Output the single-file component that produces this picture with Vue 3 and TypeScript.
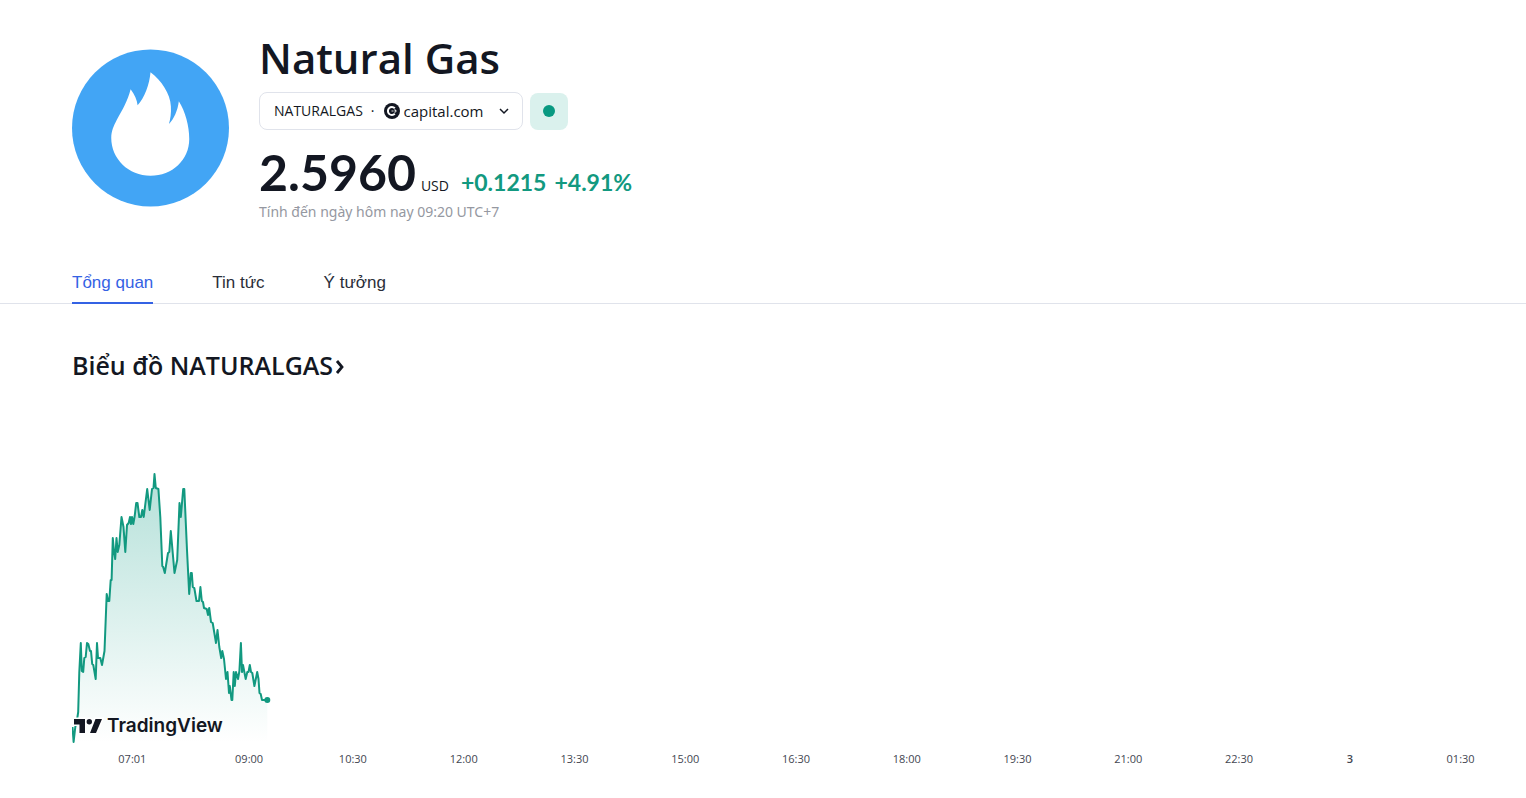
<script setup lang="ts">
interface Tab {
  label: string
  href: string
  active: boolean
}

const tabs: Tab[] = [
  { label: 'Tổng quan', href: '#overview', active: true },
  { label: 'Tin tức', href: '#news', active: false },
  { label: 'Ý tưởng', href: '#ideas', active: false },
]

const ticks: string[] = [
  '07:01', '09:00', '10:30', '12:00', '13:30', '15:00', '16:30',
  '18:00', '19:30', '21:00', '22:30', '3', '01:30',
]

const series: [number, number][] = [
  [72.5, 727], [73.6, 742], [75.3, 727], [77, 720], [78.2, 712], [79.3, 672], [80.8, 643], [81.8, 671], [83.2, 672],
  [84.3, 658], [85.7, 657], [87, 643], [88.3, 644], [90, 651], [91, 651], [92.2, 664],
  [93.3, 665], [95.7, 679], [97, 643], [98, 658], [100.3, 658], [102, 665], [104.5, 651],
  [106.7, 594], [108, 601], [109.3, 601], [110.7, 580], [111.6, 580], [112.8, 538],
  [114, 552], [115.2, 559], [116.5, 538], [117.7, 552], [119.3, 545], [121.5, 517],
  [123.5, 527], [125.3, 552], [127, 525], [128.7, 523], [130, 517], [131, 524], [132, 517],
  [133.3, 524], [134.7, 516], [136.2, 503], [137.5, 503], [139.3, 517], [141, 517],
  [142.3, 510], [143.7, 517], [147.2, 489], [149.7, 510], [152, 489], [153.5, 488],
  [154.5, 474], [155.8, 488], [158.4, 489], [160.3, 517], [162.3, 566], [163.2, 567],
  [164.8, 573], [168, 553], [169.3, 552], [170.8, 531], [174.5, 573], [177.2, 560],
  [179.5, 503], [180.8, 517], [183.2, 489], [184.3, 489], [187, 550], [189.2, 594],
  [190.8, 573], [191.8, 573], [192.8, 587], [194.3, 588], [196.5, 601], [199, 601],
  [200.4, 587], [201.8, 601], [203, 602], [204, 608], [206.7, 609], [208, 615], [209.2, 608],
  [211, 622], [212.7, 623], [216, 643], [217.5, 630], [219.3, 647], [221.2, 658],
  [222.3, 651], [224, 659], [226, 679], [227.5, 672], [229, 693], [229.8, 686], [231.5, 700],
  [232.3, 700], [233.7, 672], [234.8, 686], [236, 672], [238, 679], [239.4, 671],
  [240.9, 643], [242, 672], [243, 665], [245.7, 679], [247.3, 672], [248.5, 672],
  [249.8, 665], [251, 672], [252.3, 673], [254.4, 686], [257.2, 672], [258.5, 679],
  [259.5, 693], [260.7, 694], [262, 700], [267.3, 700],
]

const line = series.map(([x, y]) => `${x},${y}`).join(' ')
const area = `${line} 267.3,743 72.5,743`
</script>

<template>
  <main class="page">
    <header class="symbol">
      <svg class="symbol-logo" viewBox="0 0 158 158" role="img" aria-label="Natural Gas">
        <circle cx="79" cy="79" r="79" fill="#42a5f5" />
        <path
          d="M79 23C90 31 99 45 99.500 57C100 64 99 70 97.500 75C102.500 70 106.500 61 107.500 52C114 62 118 77 118 90C118 111 101 127 79 127C57 127 39.500 110 39.500 89C39.500 82 42 77 45 71C51 60 56 52 59 40C63 45 65.500 51 66 56C73 49 78 35 79 23Z"
          fill="#fff"
        />
      </svg>
      <div class="symbol-info">
        <h1 class="name">Natural Gas</h1>
        <div class="row">
          <button class="exchange" type="button">
            <span>NATURALGAS</span>
            <span class="dot">·</span>
            <svg class="source-logo" viewBox="0 0 16 16" aria-hidden="true">
              <circle cx="8" cy="8" r="8" fill="#131722" />
              <path d="M10.800 5.200A4 4 0 1 0 10.800 10.800" fill="none" stroke="#fff" stroke-width="2" />
              <path d="M7.500 8H9.500M10.500 6.500L12 8L10.500 9.500" fill="none" stroke="#ddd" stroke-width="1.200" />
            </svg>
            <span class="source">capital.com</span>
            <svg class="chevron" viewBox="0 0 12 8" aria-hidden="true">
              <path d="M2 2L6 6L10 2" fill="none" stroke="#131722" stroke-width="1.500" />
            </svg>
          </button>
          <button class="status" type="button" aria-label="Market open"><span class="status-dot"></span></button>
        </div>
        <div class="quote">
          <span class="price">2.5960</span>
          <span class="currency">USD</span>
          <span class="change">+0.1215</span>
          <span class="change percent">+4.91%</span>
        </div>
        <p class="asof">Tính đến ngày hôm nay 09:20 UTC+7</p>
      </div>
    </header>

    <nav class="tabs">
      <a v-for="tab in tabs" :key="tab.href" :href="tab.href" class="tab" :class="{ active: tab.active }">{{ tab.label }}</a>
    </nav>

    <section class="chart-section">
      <h2 class="heading">
        <a href="#chart" class="heading-link">
          <span>Biểu đồ NATURALGAS</span>
          <svg class="heading-arrow" viewBox="0 0 10 16" aria-hidden="true">
            <path d="M2 2L7 8L2 14" fill="none" stroke="#131722" stroke-width="2.800" />
          </svg>
        </a>
      </h2>
      <div class="chart">
        <svg class="plot" viewBox="72 464 208 280" aria-hidden="true">
          <defs>
            <linearGradient id="fade" gradientUnits="userSpaceOnUse" x1="0" y1="474" x2="0" y2="743">
              <stop offset="0" stop-color="#089981" stop-opacity="0.3" />
              <stop offset="1" stop-color="#089981" stop-opacity="0" />
            </linearGradient>
          </defs>
          <polygon :points="area" fill="url(#fade)" />
          <polyline :points="line" fill="none" stroke="#129980" stroke-width="2" stroke-linejoin="round" />
          <circle cx="267.300" cy="700" r="3" fill="#129980" />
        </svg>
        <a class="brand" href="#tradingview">
          <svg class="brand-mark" viewBox="0 0 30 16" aria-hidden="true">
            <path
              d="M1 1H12V15H6.500V6.500H1ZM22.500 1H29L23 15H17ZM19 3.700A2.700 2.700 0 1 1 13.600 3.700A2.700 2.700 0 1 1 19 3.700Z"
              fill="#131722" stroke="#fff" stroke-width="3" paint-order="stroke"
            />
          </svg>
          <span class="brand-name">TradingView</span>
        </a>
      </div>
      <ol class="axis">
        <li v-for="tick in ticks" :key="tick" :class="{ day: tick === '3' }">{{ tick }}</li>
      </ol>
    </section>
  </main>
</template>

<style>
body {
  background: #fff;
}
</style>

<style scoped>
.page {
  overflow: hidden;
  color: #131722;
  font-family: "Open Sans", "Noto Sans", sans-serif;
}
.symbol {
  display: flex;
  gap: 30px;
  padding: 32px 72px 0;
}
.symbol-logo {
  flex: none;
  width: 157px;
  height: 158px;
  margin-top: 17px;
}
.name {
  margin: 0;
  font-size: 42px;
  line-height: 52px;
  font-weight: 600;
}
.row {
  display: flex;
  align-items: center;
  gap: 7px;
  margin-top: 8px;
}
.exchange {
  display: flex;
  align-items: center;
  box-sizing: border-box;
  height: 38px;
  padding: 0 12px 0 14px;
  border: 1px solid #e0e3eb;
  border-radius: 8px;
  background: #fff;
  color: inherit;
  font: 14px/20px "Open Sans", "Noto Sans", sans-serif;
}
.dot {
  margin: 0 9px 0 8px;
}
.source-logo {
  width: 16px;
  height: 16px;
  margin-right: 4px;
}
.source {
  font-size: 15px;
}
.chevron {
  width: 12px;
  height: 8px;
  margin-left: 14px;
}
.status {
  display: grid;
  place-items: center;
  width: 38px;
  height: 37px;
  padding: 0;
  border: 0;
  border-radius: 8px;
  background: #daf1ed;
}
.status-dot {
  width: 12px;
  height: 12px;
  border-radius: 50%;
  background: #089981;
}
.quote {
  display: flex;
  align-items: baseline;
  margin-top: 13px;
  line-height: 20px;
}
.price {
  font-family: Lato, sans-serif;
  font-size: 50px;
  line-height: 58px;
  font-weight: 700;
}
.currency {
  margin-left: 5px;
  font-size: 14px;
}
.change {
  margin-left: 12px;
  color: #129980;
  font-family: Lato, sans-serif;
  font-size: 23px;
  font-weight: 700;
}
.percent {
  margin-left: 8px;
}
.asof {
  margin: 1px 0 0;
  color: #9598a1;
  font-family: "Noto Sans", sans-serif;
  font-size: 14px;
  line-height: 20px;
}
.tabs {
  display: flex;
  gap: 59px;
  margin-top: 40px;
  padding: 0 72px;
  border-bottom: 1px solid #e0e3eb;
  font: 17px/24px "Liberation Sans", Arial, sans-serif;
}
.tab {
  margin-bottom: -1px;
  padding: 9px 0 7px;
  border-bottom: 2px solid transparent;
  color: #2a2e39;
  text-decoration: none;
}
.active {
  border-color: #3462e4;
  color: #3462e4;
}
.heading {
  margin: 45px 72px 0;
  font-size: 25px;
  line-height: 32px;
  font-weight: 600;
}
.heading-link {
  display: inline-flex;
  align-items: center;
  gap: 2px;
  color: inherit;
  text-decoration: none;
}
.heading-arrow {
  width: 10px;
  height: 16px;
  margin-top: 4px;
}
.chart {
  position: relative;
  margin: 83px 0 0 72px;
}
.plot {
  display: block;
  width: 208px;
  height: 280px;
}
.brand {
  position: absolute;
  left: 1px;
  bottom: 5px;
  display: flex;
  align-items: center;
  gap: 4px;
  color: inherit;
  text-decoration: none;
}
.brand-mark {
  width: 30px;
  height: 16px;
  overflow: visible;
}
.brand-name {
  font: 600 19px/26px Inter, sans-serif;
}
.axis {
  display: grid;
  grid-template-columns: 137fr 97fr repeat(11, 111fr);
  margin: 5px 10px 0 64px;
  padding: 0;
  list-style: none;
  color: #434651;
  font-size: 11px;
  line-height: 20px;
  text-align: center;
}
.day {
  font-weight: 600;
}
</style>
